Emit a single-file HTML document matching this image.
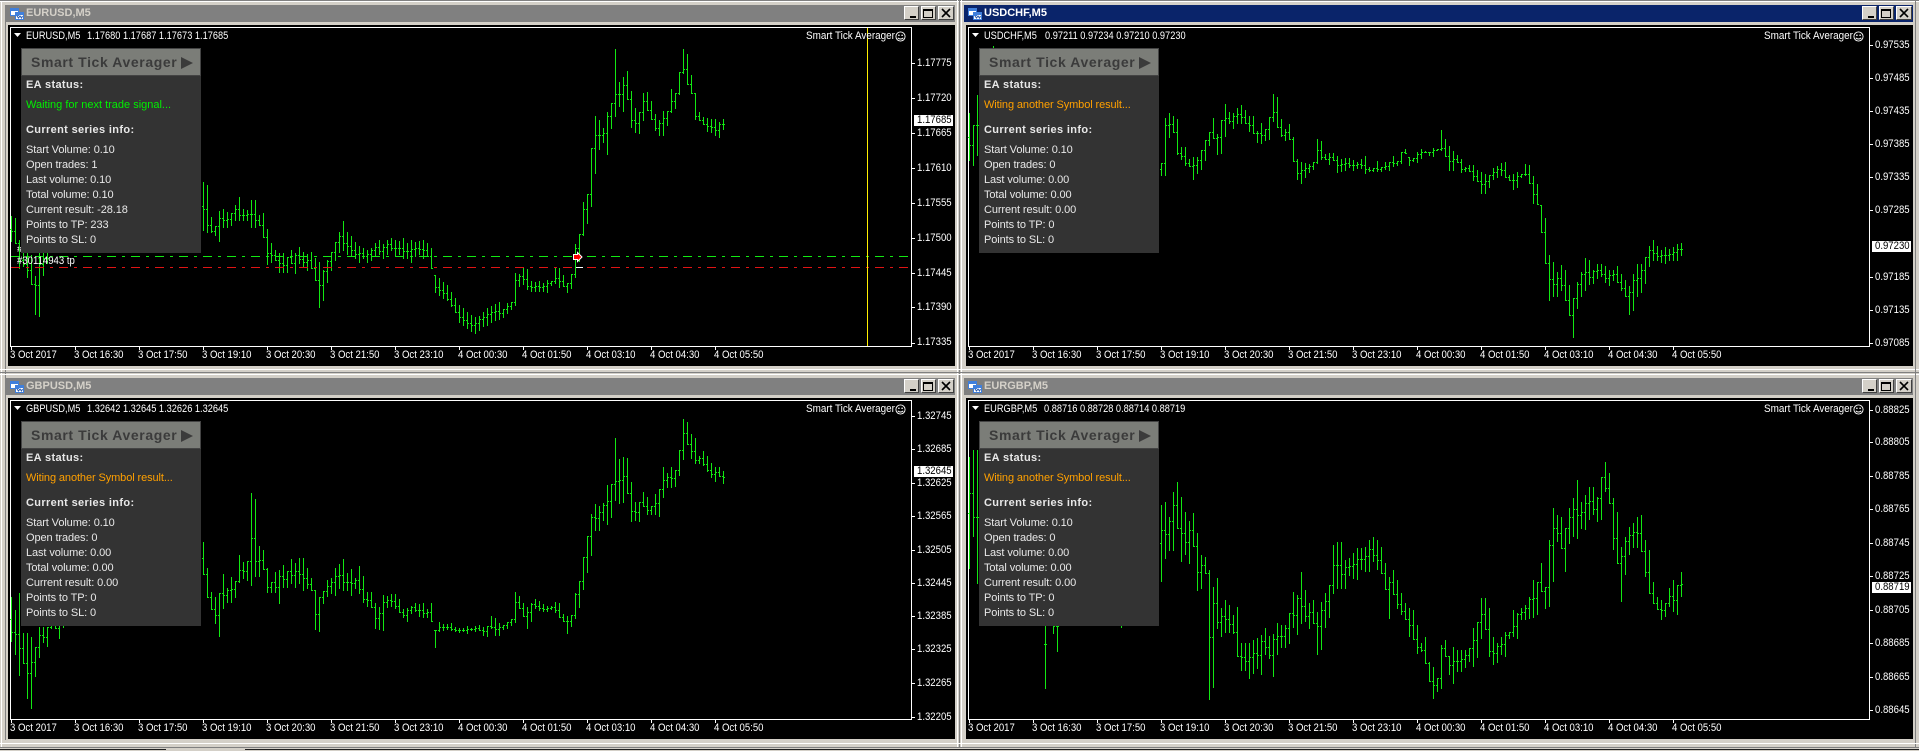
<!DOCTYPE html>
<html><head><meta charset="utf-8"><title>Charts</title>
<style>
html,body{margin:0;padding:0;background:#d4d0c8;width:1919px;height:751px;overflow:hidden}
.w{position:absolute;width:958px;height:373px}
.w>*{position:absolute}
.tb{left:6px;top:5px;width:949px;height:17px;background:#808080}
.tb.a{background:#0a246a}
.tt{left:26px;top:6px;font:bold 11px/14px "Liberation Sans",sans-serif;color:#d4d0c8;white-space:pre;letter-spacing:0}
.a+.tt{color:#fff}
.cl{left:8px;top:25px;width:947px;height:341px;background:#000}
.fr{left:10px;top:27px;width:902px;height:320px;box-sizing:border-box;border:1px solid #fff}
svg{position:absolute;left:0;top:0;overflow:visible}
.t{position:absolute;white-space:pre;font:11px/13px "Liberation Sans",sans-serif;color:#fff;transform:scaleX(.87);transform-origin:0 50%}
.t.n{transform:scaleX(.84)}
.t.m{transform:scaleX(.9)}
.cur{left:914px;width:39px;height:11px;background:#fff}
.p{left:21px;top:48px;width:180px;height:205px;background:#333}
.p>div{position:absolute}
.h{left:1px;top:1px;width:178px;height:26px;background:#7b7d78;box-shadow:0 0 0 1px #444}
.h b{position:absolute;left:9px;top:5px;font:bold 14px/16px "Liberation Sans",sans-serif;color:#3b3b3b;letter-spacing:.6px;white-space:pre}
.h i{position:absolute;left:159px;top:8px;width:0;height:0;border-left:12px solid #3b3b3b;border-top:6px solid transparent;border-bottom:6px solid transparent}
.x{left:5px;white-space:pre;font:11px/13px "Liberation Sans",sans-serif;color:#e8e8e8;letter-spacing:-.1px}
.y{left:5px;white-space:pre;font:bold 11px/13px "Liberation Sans",sans-serif;color:#e8e8e8;letter-spacing:.35px}
.btn{top:6px;width:15px;height:14px;box-sizing:border-box;background:#d4d0c8;border:1px solid;border-color:#fff #404040 #404040 #fff}
.b1{left:904px}.b2{left:921px}.b3{left:938px;width:16px}
</style></head><body>
<svg width="0" height="0" style="position:absolute"><defs>
<symbol id="ic" viewBox="0 0 14 12" width="14" height="12"><path fill="#fff" stroke="#3f7fdc" d="M.5.5h8v7h-8zM5.5 4.5h8v7h-8z" shape-rendering="crispEdges"/><path fill="#3f7fdc" d="M1 1h7v2H1zM6 5h7v2H6z"/><path fill="none" stroke="#2a5bb0" d="M7 8l1.500 2 1.500-2 1.500 2 1-2"/></symbol>
<symbol id="sm" viewBox="0 0 12 12" width="12" height="12"><circle cx="6" cy="6" r="5" fill="none" stroke="#fff"/><path fill="#fff" d="M3.500 4h1.500v1.500H3.500zM7 4h1.500v1.500H7z"/><path fill="none" stroke="#fff" d="M3 7.500q3 2.500 6 0"/></symbol>
<symbol id="tk" viewBox="0 0 958 373" width="958" height="373"><path stroke="#fff" shape-rendering="crispEdges" d="M11.500 347v3M75.500 347v3M139.500 347v3M203.500 347v3M267.500 347v3M331.500 347v3M395.500 347v3M459.500 347v3M523.500 347v3M587.500 347v3M651.500 347v3M715.500 347v3"/></symbol>
</defs></svg>

<!-- frame lines -->
<div style="position:absolute;left:0;top:0;width:1919px;height:1px;background:#808080"></div>
<div style="position:absolute;left:0;top:1px;width:1919px;height:1px;background:#fff"></div>
<div style="position:absolute;left:1px;top:1px;width:1px;height:746px;background:#fff"></div>
<div style="position:absolute;left:5px;top:5px;width:1px;height:735px;background:#808080"></div>
<div style="position:absolute;left:957px;top:0;width:1px;height:748px;background:#fff"></div>
<div style="position:absolute;left:959px;top:0;width:1px;height:748px;background:#808080"></div>
<div style="position:absolute;left:961px;top:0;width:1px;height:748px;background:#fff"></div>
<div style="position:absolute;left:0;top:369px;width:1919px;height:1px;background:#fff"></div>
<div style="position:absolute;left:0;top:372px;width:1919px;height:1px;background:#808080"></div>
<div style="position:absolute;left:0;top:374px;width:1919px;height:1px;background:#fff"></div>
<div style="position:absolute;left:1915px;top:0;width:1px;height:748px;background:#808080"></div>
<div style="position:absolute;left:0;top:743px;width:1919px;height:1px;background:#fff"></div>
<div style="position:absolute;left:0;top:747px;width:1919px;height:1px;background:#808080"></div>
<div style="position:absolute;left:0;top:749px;width:166px;height:1px;background:#202020"></div>
<div style="position:absolute;left:245px;top:749px;width:1674px;height:1px;background:#202020"></div>

<!-- EURUSD -->
<div class="w" style="left:0;top:0">
<div class="tb"></div><div class="tt">EURUSD,M5</div>
<svg style="left:10px;top:8px" width="14" height="12"><use href="#ic"/></svg>
<div class="btn b1"><svg width="13" height="12"><path d="M5 9h6v2H5z"/></svg></div>
<div class="btn b2"><svg width="13" height="12"><path fill="none" stroke="#000" d="M1.500 2.500h9v8h-9z"/><path d="M1 2h10v2H1z"/></svg></div>
<div class="btn b3"><svg width="14" height="12"><path stroke="#000" stroke-width="1.600" d="M3 2l8 8M11 2l-8 8"/></svg></div>
<div class="cl"></div><div class="fr"></div>
<svg width="958" height="373"><text x="17" y="252" fill="#fff" font-family="Liberation Sans" font-size="10">#30114943 sell 0.10 EURUSD</text><path id="c1" fill="none" stroke="#12e812" shape-rendering="crispEdges"/>
<path d="M11 256.500H908" stroke="#12e812" stroke-dasharray="9 6 3 6" shape-rendering="crispEdges"/>
<path d="M11 267.500H908" stroke="#e01414" stroke-dasharray="9 6 3 6" shape-rendering="crispEdges"/>
<path d="M867.500 28V346" stroke="#ffee00" shape-rendering="crispEdges"/>
<path d="M576 267.500h7" stroke="#fff" shape-rendering="crispEdges"/>
<path d="M573.500 254.500h4v-2l4.500 4.500-4.500 4.500v-2h-4z" fill="#f00" stroke="#fff"/>
<path stroke="#fff" shape-rendering="crispEdges" d="M912 63.500h3M912 98.500h3M912 133.500h3M912 168.500h3M912 203.500h3M912 238.500h3M912 273.500h3M912 307.500h3M912 343.500h3"/>
<use href="#tk"/></svg>
<div class="t" style="left:17px;top:255px">#30114943 tp</div>
<svg style="left:14px;top:33px" width="8" height="5"><path fill="#fff" d="M0 0h7L3.500 4z"/></svg>
<div class="t n" style="left:26px;top:30px">EURUSD,M5</div><div class="t n" style="left:87px;top:30px">1.17680 1.17687 1.17673 1.17685</div>
<div class="t m" style="left:806px;top:30px">Smart Tick Averager</div>
<svg style="left:895px;top:31px" width="11" height="11"><use href="#sm" width="11" height="11"/></svg>
<div class="p"><div class="h"><b>Smart Tick Averager</b><i></i></div>
<div class="y" style="top:31px">EA status:</div><div class="x" style="top:51px;color:#00f000;letter-spacing:0">Waiting for next trade signal...</div><div class="y" style="top:76px">Current series info:</div>
<div class="x" style="top:96px">Start Volume: 0.10</div><div class="x" style="top:111px">Open trades: 1</div><div class="x" style="top:126px">Last volume: 0.10</div><div class="x" style="top:141px">Total volume: 0.10</div><div class="x" style="top:156px">Current result: -28.18</div><div class="x" style="top:171px">Points to TP: 233</div><div class="x" style="top:186px">Points to SL: 0</div></div>
<div class="t" style="left:917px;top:57px">1.17775</div><div class="t" style="left:917px;top:92px">1.17720</div><div class="t" style="left:917px;top:127px">1.17665</div><div class="t" style="left:917px;top:162px">1.17610</div><div class="t" style="left:917px;top:197px">1.17555</div><div class="t" style="left:917px;top:232px">1.17500</div><div class="t" style="left:917px;top:267px">1.17445</div><div class="t" style="left:917px;top:301px">1.17390</div><div class="t" style="left:917px;top:336px">1.17335</div>
<div class="cur" style="top:115px"></div><div class="t" style="left:917px;top:114px;color:#000">1.17685</div>
<div class="t" style="left:10px;top:349px">3 Oct 2017</div><div class="t" style="left:74px;top:349px">3 Oct 16:30</div><div class="t" style="left:138px;top:349px">3 Oct 17:50</div><div class="t" style="left:202px;top:349px">3 Oct 19:10</div><div class="t" style="left:266px;top:349px">3 Oct 20:30</div><div class="t" style="left:330px;top:349px">3 Oct 21:50</div><div class="t" style="left:394px;top:349px">3 Oct 23:10</div><div class="t" style="left:458px;top:349px">4 Oct 00:30</div><div class="t" style="left:522px;top:349px">4 Oct 01:50</div><div class="t" style="left:586px;top:349px">4 Oct 03:10</div><div class="t" style="left:650px;top:349px">4 Oct 04:30</div><div class="t" style="left:714px;top:349px">4 Oct 05:50</div>
</div>

<!-- USDCHF -->
<div class="w" style="left:958px;top:0">
<div class="tb a"></div><div class="tt">USDCHF,M5</div>
<svg style="left:10px;top:8px" width="14" height="12"><use href="#ic"/></svg>
<div class="btn b1"><svg width="13" height="12"><path d="M5 9h6v2H5z"/></svg></div>
<div class="btn b2"><svg width="13" height="12"><path fill="none" stroke="#000" d="M1.500 2.500h9v8h-9z"/><path d="M1 2h10v2H1z"/></svg></div>
<div class="btn b3"><svg width="14" height="12"><path stroke="#000" stroke-width="1.600" d="M3 2l8 8M11 2l-8 8"/></svg></div>
<div class="cl"></div><div class="fr"></div>
<svg width="958" height="373"><path id="c2" fill="none" stroke="#12e812" shape-rendering="crispEdges"/>
<path stroke="#fff" shape-rendering="crispEdges" d="M912 45.500h3M912 78.500h3M912 111.500h3M912 144.500h3M912 177.500h3M912 210.500h3M912 277.500h3M912 310.500h3M912 343.500h3"/>
<use href="#tk"/></svg>
<svg style="left:14px;top:33px" width="8" height="5"><path fill="#fff" d="M0 0h7L3.500 4z"/></svg>
<div class="t n" style="left:26px;top:30px">USDCHF,M5</div><div class="t n" style="left:87px;top:30px">0.97211 0.97234 0.97210 0.97230</div>
<div class="t m" style="left:806px;top:30px">Smart Tick Averager</div>
<svg style="left:895px;top:31px" width="11" height="11"><use href="#sm" width="11" height="11"/></svg>
<div class="p"><div class="h"><b>Smart Tick Averager</b><i></i></div>
<div class="y" style="top:31px">EA status:</div><div class="x" style="top:51px;color:#ffa000">Witing another Symbol result...</div><div class="y" style="top:76px">Current series info:</div>
<div class="x" style="top:96px">Start Volume: 0.10</div><div class="x" style="top:111px">Open trades: 0</div><div class="x" style="top:126px">Last volume: 0.00</div><div class="x" style="top:141px">Total volume: 0.00</div><div class="x" style="top:156px">Current result: 0.00</div><div class="x" style="top:171px">Points to TP: 0</div><div class="x" style="top:186px">Points to SL: 0</div></div>
<div class="t" style="left:917px;top:39px">0.97535</div><div class="t" style="left:917px;top:72px">0.97485</div><div class="t" style="left:917px;top:105px">0.97435</div><div class="t" style="left:917px;top:138px">0.97385</div><div class="t" style="left:917px;top:171px">0.97335</div><div class="t" style="left:917px;top:204px">0.97285</div><div class="t" style="left:917px;top:271px">0.97185</div><div class="t" style="left:917px;top:304px">0.97135</div><div class="t" style="left:917px;top:337px">0.97085</div>
<div class="cur" style="top:241px"></div><div class="t" style="left:917px;top:240px;color:#000">0.97230</div>
<div class="t" style="left:10px;top:349px">3 Oct 2017</div><div class="t" style="left:74px;top:349px">3 Oct 16:30</div><div class="t" style="left:138px;top:349px">3 Oct 17:50</div><div class="t" style="left:202px;top:349px">3 Oct 19:10</div><div class="t" style="left:266px;top:349px">3 Oct 20:30</div><div class="t" style="left:330px;top:349px">3 Oct 21:50</div><div class="t" style="left:394px;top:349px">3 Oct 23:10</div><div class="t" style="left:458px;top:349px">4 Oct 00:30</div><div class="t" style="left:522px;top:349px">4 Oct 01:50</div><div class="t" style="left:586px;top:349px">4 Oct 03:10</div><div class="t" style="left:650px;top:349px">4 Oct 04:30</div><div class="t" style="left:714px;top:349px">4 Oct 05:50</div>
</div>

<!-- GBPUSD -->
<div class="w" style="left:0;top:373px">
<div class="tb"></div><div class="tt">GBPUSD,M5</div>
<svg style="left:10px;top:8px" width="14" height="12"><use href="#ic"/></svg>
<div class="btn b1"><svg width="13" height="12"><path d="M5 9h6v2H5z"/></svg></div>
<div class="btn b2"><svg width="13" height="12"><path fill="none" stroke="#000" d="M1.500 2.500h9v8h-9z"/><path d="M1 2h10v2H1z"/></svg></div>
<div class="btn b3"><svg width="14" height="12"><path stroke="#000" stroke-width="1.600" d="M3 2l8 8M11 2l-8 8"/></svg></div>
<div class="cl"></div><div class="fr"></div>
<svg width="958" height="373"><path id="c3" fill="none" stroke="#12e812" shape-rendering="crispEdges"/>
<path stroke="#fff" shape-rendering="crispEdges" d="M912 43.500h3M912 76.500h3M912 110.500h3M912 143.500h3M912 177.500h3M912 210.500h3M912 243.500h3M912 276.500h3M912 310.500h3M912 344.500h3"/>
<use href="#tk"/></svg>
<svg style="left:14px;top:33px" width="8" height="5"><path fill="#fff" d="M0 0h7L3.500 4z"/></svg>
<div class="t n" style="left:26px;top:30px">GBPUSD,M5</div><div class="t n" style="left:87px;top:30px">1.32642 1.32645 1.32626 1.32645</div>
<div class="t m" style="left:806px;top:30px">Smart Tick Averager</div>
<svg style="left:895px;top:31px" width="11" height="11"><use href="#sm" width="11" height="11"/></svg>
<div class="p"><div class="h"><b>Smart Tick Averager</b><i></i></div>
<div class="y" style="top:31px">EA status:</div><div class="x" style="top:51px;color:#ffa000">Witing another Symbol result...</div><div class="y" style="top:76px">Current series info:</div>
<div class="x" style="top:96px">Start Volume: 0.10</div><div class="x" style="top:111px">Open trades: 0</div><div class="x" style="top:126px">Last volume: 0.00</div><div class="x" style="top:141px">Total volume: 0.00</div><div class="x" style="top:156px">Current result: 0.00</div><div class="x" style="top:171px">Points to TP: 0</div><div class="x" style="top:186px">Points to SL: 0</div></div>
<div class="t" style="left:917px;top:37px">1.32745</div><div class="t" style="left:917px;top:70px">1.32685</div><div class="t" style="left:917px;top:104px">1.32625</div><div class="t" style="left:917px;top:137px">1.32565</div><div class="t" style="left:917px;top:171px">1.32505</div><div class="t" style="left:917px;top:204px">1.32445</div><div class="t" style="left:917px;top:237px">1.32385</div><div class="t" style="left:917px;top:270px">1.32325</div><div class="t" style="left:917px;top:304px">1.32265</div><div class="t" style="left:917px;top:338px">1.32205</div>
<div class="cur" style="top:93px"></div><div class="t" style="left:917px;top:92px;color:#000">1.32645</div>
<div class="t" style="left:10px;top:349px">3 Oct 2017</div><div class="t" style="left:74px;top:349px">3 Oct 16:30</div><div class="t" style="left:138px;top:349px">3 Oct 17:50</div><div class="t" style="left:202px;top:349px">3 Oct 19:10</div><div class="t" style="left:266px;top:349px">3 Oct 20:30</div><div class="t" style="left:330px;top:349px">3 Oct 21:50</div><div class="t" style="left:394px;top:349px">3 Oct 23:10</div><div class="t" style="left:458px;top:349px">4 Oct 00:30</div><div class="t" style="left:522px;top:349px">4 Oct 01:50</div><div class="t" style="left:586px;top:349px">4 Oct 03:10</div><div class="t" style="left:650px;top:349px">4 Oct 04:30</div><div class="t" style="left:714px;top:349px">4 Oct 05:50</div>
</div>

<!-- EURGBP -->
<div class="w" style="left:958px;top:373px">
<div class="tb"></div><div class="tt">EURGBP,M5</div>
<svg style="left:10px;top:8px" width="14" height="12"><use href="#ic"/></svg>
<div class="btn b1"><svg width="13" height="12"><path d="M5 9h6v2H5z"/></svg></div>
<div class="btn b2"><svg width="13" height="12"><path fill="none" stroke="#000" d="M1.500 2.500h9v8h-9z"/><path d="M1 2h10v2H1z"/></svg></div>
<div class="btn b3"><svg width="14" height="12"><path stroke="#000" stroke-width="1.600" d="M3 2l8 8M11 2l-8 8"/></svg></div>
<div class="cl"></div><div class="fr"></div>
<svg width="958" height="373"><path id="c4" fill="none" stroke="#12e812" shape-rendering="crispEdges"/>
<path stroke="#fff" shape-rendering="crispEdges" d="M912 37.500h3M912 69.500h3M912 103.500h3M912 136.500h3M912 170.500h3M912 203.500h3M912 237.500h3M912 270.500h3M912 304.500h3M912 337.500h3"/>
<use href="#tk"/></svg>
<svg style="left:14px;top:33px" width="8" height="5"><path fill="#fff" d="M0 0h7L3.500 4z"/></svg>
<div class="t n" style="left:26px;top:30px">EURGBP,M5</div><div class="t n" style="left:86px;top:30px">0.88716 0.88728 0.88714 0.88719</div>
<div class="t m" style="left:806px;top:30px">Smart Tick Averager</div>
<svg style="left:895px;top:31px" width="11" height="11"><use href="#sm" width="11" height="11"/></svg>
<div class="p"><div class="h"><b>Smart Tick Averager</b><i></i></div>
<div class="y" style="top:31px">EA status:</div><div class="x" style="top:51px;color:#ffa000">Witing another Symbol result...</div><div class="y" style="top:76px">Current series info:</div>
<div class="x" style="top:96px">Start Volume: 0.10</div><div class="x" style="top:111px">Open trades: 0</div><div class="x" style="top:126px">Last volume: 0.00</div><div class="x" style="top:141px">Total volume: 0.00</div><div class="x" style="top:156px">Current result: 0.00</div><div class="x" style="top:171px">Points to TP: 0</div><div class="x" style="top:186px">Points to SL: 0</div></div>
<div class="t" style="left:917px;top:31px">0.88825</div><div class="t" style="left:917px;top:63px">0.88805</div><div class="t" style="left:917px;top:97px">0.88785</div><div class="t" style="left:917px;top:130px">0.88765</div><div class="t" style="left:917px;top:164px">0.88745</div><div class="t" style="left:917px;top:197px">0.88725</div><div class="t" style="left:917px;top:231px">0.88705</div><div class="t" style="left:917px;top:264px">0.88685</div><div class="t" style="left:917px;top:298px">0.88665</div><div class="t" style="left:917px;top:331px">0.88645</div>
<div class="cur" style="top:209px"></div><div class="t" style="left:917px;top:208px;color:#000">0.88719</div>
<div class="t" style="left:10px;top:349px">3 Oct 2017</div><div class="t" style="left:74px;top:349px">3 Oct 16:30</div><div class="t" style="left:138px;top:349px">3 Oct 17:50</div><div class="t" style="left:202px;top:349px">3 Oct 19:10</div><div class="t" style="left:266px;top:349px">3 Oct 20:30</div><div class="t" style="left:330px;top:349px">3 Oct 21:50</div><div class="t" style="left:394px;top:349px">3 Oct 23:10</div><div class="t" style="left:458px;top:349px">4 Oct 00:30</div><div class="t" style="left:522px;top:349px">4 Oct 01:50</div><div class="t" style="left:586px;top:349px">4 Oct 03:10</div><div class="t" style="left:650px;top:349px">4 Oct 04:30</div><div class="t" style="left:714px;top:349px">4 Oct 05:50</div>
</div>

<script>
function D(id,segs){var b=[];segs.forEach(function(s){s[3].trim().split(/\s+/).forEach(function(p,i){var a=p.split(',');b[s[0]+i]=[Math.round(s[1]+a[0]/s[2]),Math.round(s[1]+a[1]/s[2])]})});
var d='',pc=null;function cl(v,r){return Math.max(r[0],Math.min(r[1],v))}
for(var k=0;k<b.length;k++){var r=b[k];if(!r){pc=null;continue}var x=11+4*k,n=b[k+1];var c=cl(n?Math.round((n[0]+n[1])/2):Math.round((r[0]+r[1])/2),r);var o=pc===null?Math.round((r[0]+r[1])/2):cl(pc,r);
d+='M'+(x+.5)+' '+r[0]+'V'+(r[1]+1)+'M'+(x-1)+' '+(o+.5)+'h1M'+(x+1)+' '+(c+.5)+'h1';pc=c}
document.getElementById(id).setAttribute('d',d)}
D('c1',[[0,0,1,"216,241 218,243 240,268 253,266 250,277 255,284 276,314 253,316 253,275 253,263"],
[48,0,3,"545,690 555,695 650,695 678,705 632,722 628,682 635,682 640,675 615,660 590,660 628,660 630,660 600,682 600,680 645,675 640,710 688,792 730,785 750,780 760,815 760,815 770,815 750,790 760,820 740,790"],
[73,0,1,"252,266 254,270 252,268 258,280 262,307 270,300 260,282 252,270 242,260 232,252 221,250 232,254 236,256 242,258 246,262 248,258 250,262 248,260 243,256 240,254 244,258 240,254 238,250 240,256 241,254 238,258 243,258 240,262 242,256 241,254 240,258 243,256 248,268 275,292 278,295 282,298 285,300 292,306 298,312 305,322 308,325 312,328 315,331 317,333 316,330 312,326 308,325 306,322 304,320 302,319"],
[123,40,3,"808,830 790,820 787,808 700,795 702,738 684,732 686,747 722,752 725,752 722,752 728,752 720,755 722,735 680,730 685,740 705,737 730,755 702,745 612,710 583,662 487,585 462,548 324,497 229,398 240,328 265,305 216,341 190,263 27,228 125,198 112,212 94,178 152,260 205,275 215,278 160,240 156,210 183,237 222,270 240,285 212,284 212,255 148,215 160,204 95,162 27,100 43,132 105,160 160,237 217,240 232,252 235,274 238,275 238,285 245,290 238,267"]]);
D('c2',[[0,0,1,"113,160 125,165 95,155"],[6,0,1,"46,60"],
[48,60,3,"308,345 175,345 160,230 168,215 178,282 262,297 262,315 297,318 292,356 290,338 270,326 240,300 217,255 175,235 222,281 180,280 132,228 157,190 160,204 145,190 135,190 151,188 168,212 168,218 212,246 190,248 207,240 172,236 102,182 112,202 178,228 208,240 192,238 232,302 296,358 306,368 310,350 312,335 307,328 237,310 243,298 283,298 280,312 280,299 288,335 298,332 294,330 295,320 300,330 305,325 296,325 288,338 322,333 325,332 303,332 320,332 306,328 306,330 288,318 303,314 277,308 267,280 292,315 294,304 277,306 267,293 273,275 275,286 264,287 266,270 210,270 237,287 258,330 273,330 285,306 297,336 322,334 316,334 315,359 330,362 336,398 342,398 345,380 323,358 318,352 310,346 306,352 345,360 342,386 337,380 342,352 312,344 316,368 348,428 372,432"],
[143,0,1,"205,232 218,263 255,300 262,296 272,296 265,290 270,300 285,315 298,337 282,308 272,296 258,290 260,284 270,283 264,278 264,276 266,282 270,285 270,280 266,282 274,290 280,296 286,314 274,310 264,296 264,292 257,283 246,266 240,260 246,260 250,262 247,263 249,260 247,260 244,260 243,255"]]);
D('c3',[[0,27,3,"590,722 630,762 580,825 700,790 700,895 712,923 740,827 680,772 680,725 680,738 660,685 660,685 660,714 660,680"],
[48,27,3,"426,522 505,590 575,627 590,670 580,707 522,625 563,605 532,605 543,592 465,545 485,535 482,540 280,555 297,527 437,527 450,507 505,575 545,575 516,575 510,608 495,560 512,562 477,550 490,560 475,548 475,570 505,565 535,570 570,688 592,692 572,610 540,587 535,580 505,585 492,565 477,570 520,570 507,585 535,565 497,580 528,605 577,617 577,620 610,683 620,688 585,690 587,620 582,617 582,625 597,635 627,650 625,662 618,640 610,632 612,648 610,650 627,650 610,662 690,740 667,692 672,690 672,688 670,690 680,692 685,695 684,692 678,698 684,690 678,692 675,690 682,705 678,708 648,685 655,705 670,705 675,687 665,685 658,675 576,667 588,625 610,648 620,684 610,662 597,625 602,630 612,632 618,632 618,627 605,636 608,652 642,662 648,698 645,678 580,655 543,620 472,566 408,515 342,465 312,390 318,390 310,360 255,372 253,350 114,300 178,308 172,305 175,278 247,362 306,360 306,362 277,318 292,342 318,342 282,342 267,347 202,292 220,260 202,260 210,258 150,226 57,178 67,132 103,173 115,190 168,188 153,195 168,214 190,232 202,242 202,227 214,248"]]);
D('c4',[[0,27,3,"172,503 150,408 150,550"],[19,27,3,"600,863"],[21,27,3,"600,698 600,752"],[38,27,3,"600,682"],
[48,27,3,"315,543 306,473 352,450 276,450 247,385 292,482 336,462 363,490 340,437 400,570 465,565 472,520 510,896 560,862 535,684 625,708 600,696 615,695 645,700 620,768 728,810 728,810 728,833 720,818 715,805 705,822 685,762 708,775 703,828 670,762 675,742 675,742 640,730 575,680 585,702 516,670 570,662 610,684 600,670 635,762 605,746 580,680 555,652 435,578 425,565 425,565 480,565 475,525 460,535 445,538 445,508 440,512 420,512 411,482 420,506 440,518 490,566 530,655 510,582 540,623 580,642 610,656 625,708 630,716 675,758 730,752 712,790 786,842 802,893 835,873 735,863 720,768 768,822 742,848 750,812 750,812 750,802 745,782 684,797 666,772 595,715 595,686 625,767 712,791 730,787 712,762 697,767 697,713 630,708 640,713 625,656 615,656 592,653 540,650 545,641 490,572 560,623 420,617 325,542 345,422 352,443 385,512 323,430 295,408 240,413 305,383 285,386 262,357 262,342 292,362 232,356 186,272 220,308 295,446 336,488 442,602 412,521 380,462 370,442 352,442 346,452 420,527 450,580 546,608 592,627 600,656 610,647 565,617 540,632 555,641 516,587"]]);
</script>
</body></html>
